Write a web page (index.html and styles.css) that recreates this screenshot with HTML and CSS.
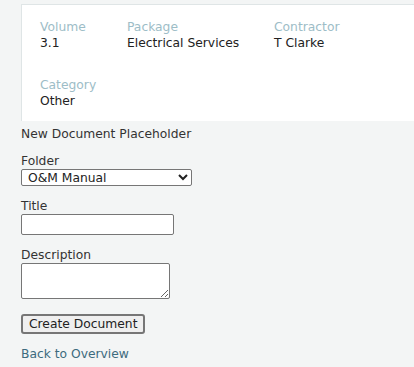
FILE: index.html
```html
<!DOCTYPE html>
<html lang="en">
<head>
	<meta charset="UTF-8">
	<title>New Document</title>
	<link rel="stylesheet" href="styles.css">
</head>
<body>
	<div class="page">
		<div class="card">
			<div class="row">
				<div class="item item-vol">
					<span class="label">Volume</span>
					<span class="value">3.1</span>
				</div>
				<div class="item item-pkg">
					<span class="label">Package</span>
					<span class="value">Electrical Services</span>
				</div>
				<div class="item">
					<span class="label">Contractor</span>
					<span class="value">T Clarke</span>
				</div>
			</div>
			<div class="row">
				<div class="item">
					<span class="label">Category</span>
					<span class="value">Other</span>
				</div>
			</div>
		</div>
		<form class="doc-form">
			<p class="heading">New Document Placeholder</p>
			<div class="field">
				<label for="folder">Folder</label>
				<select id="folder" class="sel">
					<option>O&amp;M Manual</option>
				</select>
			</div>
			<div class="field">
				<label for="title">Title</label>
				<input id="title" type="text" class="txt">
			</div>
			<div class="field">
				<label for="desc">Description</label>
				<textarea id="desc" class="area"></textarea>
			</div>
			<div class="field field-btn">
				<button type="button" class="btn">Create Document</button>
			</div>
			<a href="#" class="back">Back to Overview</a>
		</form>
	</div>
</body>
</html>
```

FILE: styles.css
```css
body{
	margin:0;
	background:#f3f5f5;
	font-family:"DejaVu Sans", sans-serif;
	font-size:12.3px;
	line-height:16px;
	color:#222;
}
.page{
	padding:4px 0 0 21px;
}
.card{
	background:#fff;
	border-top:1px solid #dfe5e6;
	border-left:1px solid #dfe5e6;
	padding:14px 18px 12px;
}
.row{
	display:flex;
}
.row + .row{
	margin-top:26px;
}
.item{
	display:flex;
	flex-direction:column;
}
.item-vol{
	width:87px;
}
.item-pkg{
	width:147px;
}
.label{
	color:#9dbdc7;
}
.value{
	color:#222;
}
.doc-form{
	padding-top:5px;
}
.heading{
	margin:0 0 11px;
	color:#333;
}
.field{
	margin-bottom:12px;
}
.field label{
	display:block;
	color:#333;
}
.sel{
	display:block;
	width:171px;
	height:17px;
	font:inherit;
	padding:0 2px;
	border:1px solid #767676;
	border-radius:2px;
	background:#fff;
	color:#222;
}
.txt{
	display:block;
	width:153px;
	height:21px;
	box-sizing:border-box;
	font:inherit;
	border:1px solid #767676;
	border-radius:2px;
}
.area{
	display:block;
	width:149px;
	height:36px;
	box-sizing:border-box;
	font:inherit;
	border:1px solid #767676;
	border-radius:2px;
	resize:both;
}
.field-btn{
	margin-top:15px;
}
.btn{
	display:block;
	height:20px;
	padding:0 6px;
	font:inherit;
	color:#222;
	background:#efefef;
	border:2px solid #767676;
	border-radius:3px;
	box-sizing:border-box;
}
.back{
	display:block;
	color:#3d6b7e;
	text-decoration:none;
}
```
